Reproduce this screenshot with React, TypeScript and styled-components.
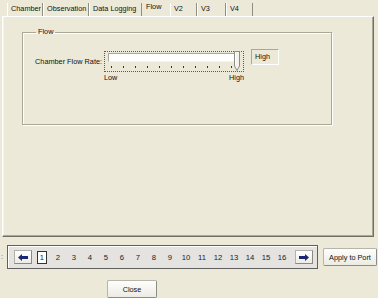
import * as React from 'react';
import styled, { createGlobalStyle, css } from 'styled-components';

const GlobalStyle = createGlobalStyle`
  html, body {
    margin: 0;
    padding: 0;
    background: #ece9d8;
  }

  body {
    font-family: 'Liberation Sans', Arial, sans-serif;
    font-size: 7.3px;
    color: #111;
  }
`;

const Window = styled.div`
  width: 378px;
  height: 298px;
  overflow: hidden;
  background: #ece9d8;
  display: flex;
  flex-direction: column;
`;

const TabStrip = styled.div`
  display: flex;
  align-items: flex-end;
  height: 16px;
  padding-left: 7px;
`;

const Tab = styled.div<{ $width: number; $selected?: boolean }>`
  box-sizing: border-box;
  width: ${({ $width }) => $width}px;
  height: 13px;
  line-height: 12px;
  padding-left: 4px;
  white-space: nowrap;
  border-right: 1px solid #8e8e86;
  box-shadow: inset 1px 0 0 #fff;

  ${({ $selected }) =>
    $selected &&
    css`
      height: 16px;
      line-height: 13px;
      padding-left: 4px;
      border-right: none;
      box-shadow: none;
    `}
`;

const Panel = styled.div`
  box-sizing: border-box;
  height: 226px;
  margin: 0 4px 0 2px;
  border-top: 1px solid #fff;
  border-left: 1px solid #fff;
  border-right: 1px solid #716f64;
  border-bottom: 1px solid #716f64;
  box-shadow: inset -1px -1px 0 #aca899, inset 1px 0 0 #f4f3ee;
  padding: 10px 0 0 19px;
`;

const GroupBox = styled.fieldset`
  box-sizing: border-box;
  width: 310px;
  height: 98px;
  margin: 0;
  padding: 14px 0 0 10px;
  border: 1px solid #aca899;
  box-shadow: 1px 1px 0 #fff, inset 1px 1px 0 #fff;
`;

const GroupTitle = styled.legend`
  margin-left: 3px;
  padding: 0 2px;
  line-height: 10px;
`;

const FieldGrid = styled.div`
  display: grid;
  grid-template-columns: 71px 140px 28px;
  grid-template-rows: auto auto;
  column-gap: 0;
  align-items: start;

  & > :nth-child(3) {
    margin-left: 7px;
    margin-top: -2px;
  }
`;

const FieldLabel = styled.div`
  text-align: right;
  padding-right: 2px;
  line-height: 10px;
  margin-top: 6px;
  white-space: nowrap;
`;

const SliderFrame = styled.div`
  position: relative;
  box-sizing: border-box;
  height: 21px;
  border: 1px dotted #5a5a5a;
  padding: 1px 0 0 3px;
`;

const Track = styled.div`
  box-sizing: border-box;
  width: 128px;
  height: 9px;
  background: #fff;
  border-top: 1px solid #aca899;
  border-left: 1px solid #aca899;
  border-bottom: 1px solid #f4f3ee;
`;

const Thumb = styled.svg`
  position: absolute;
  top: -1px;
  right: 3px;
`;

const Ticks = styled.div`
  display: flex;
  justify-content: space-between;
  padding: 4px 11px 0 3px;
`;

const Tick = styled.span`
  width: 1px;
  height: 2px;
  background: #333;
`;

const RangeLabels = styled.div`
  grid-column: 2;
  display: flex;
  justify-content: space-between;
  line-height: 9px;
  margin-top: 1px;
`;

const ValueBox = styled.div`
  box-sizing: border-box;
  width: 28px;
  height: 16px;
  line-height: 14px;
  padding-left: 3px;
  border-top: 1px solid #aca899;
  border-left: 1px solid #aca899;
  border-right: 1px solid #fff;
  border-bottom: 1px solid #fff;
`;

const Footer = styled.div`
  display: flex;
  align-items: flex-start;
  margin-top: 8px;
`;

const Grip = styled.span`
  width: 7px;
  line-height: 24px;
  padding-left: 1px;
  box-sizing: border-box;
  color: #555;
`;

const NavBar = styled.div`
  box-sizing: border-box;
  width: 311px;
  height: 24px;
  display: flex;
  align-items: center;
  padding-left: 6px;
  background: #e4e3df;
  border: 1px solid #5f5f5f;
  box-shadow: inset 1px 1px 0 #fff;
`;

const ArrowButton = styled.button<{ $side: 'left' | 'right' }>`
  box-sizing: border-box;
  width: 18px;
  height: 14px;
  padding: 0;
  display: flex;
  align-items: center;
  justify-content: center;
  background: linear-gradient(#ffffff, #ecebe4);
  border: 1px solid #b4b2a8;
  border-right-color: #8b8a82;
  border-bottom-color: #8b8a82;
  ${({ $side }) => ($side === 'left' ? 'margin-right: 2px;' : 'margin-left: 5px;')}
`;

const PageCell = styled.span<{ $active?: boolean }>`
  width: 16px;
  display: flex;
  justify-content: center;
  color: #222;
  line-height: 11px;
  font-size: 7.7px;

  ${({ $active }) =>
    $active &&
    css`
      & > span {
        box-sizing: border-box;
        width: 10px;
        height: 13px;
        line-height: 11px;
        text-align: center;
        background: #fff;
        border: 1px solid #333;
      }
    `}
`;

const PushButton = styled.button<{ $width: number }>`
  box-sizing: border-box;
  width: ${({ $width }) => $width}px;
  height: 18px;
  padding: 0;
  font-family: inherit;
  font-size: 7.3px;
  color: #111;
  background: linear-gradient(#fefefd, #ecebe3);
  border: 1px solid #b7b5ab;
  border-right-color: #8d8c84;
  border-bottom-color: #8d8c84;
  border-radius: 2px;
`;

const ApplyButton = styled(PushButton)`
  margin: 3px 0 0 5px;
`;

const CloseRow = styled.div`
  padding: 11px 0 0 107px;
`;

const tabs = [
  { label: 'Chamber', width: 36 },
  { label: 'Observation', width: 46 },
  { label: 'Data Logging', width: 53 },
  { label: 'Flow', width: 28, selected: true },
  { label: 'V2', width: 27 },
  { label: 'V3', width: 29 },
  { label: 'V4', width: 27 },
];

const pages = Array.from({ length: 16 }, (_, i) => i + 1);

const Arrow = ({ dir }: { dir: 'left' | 'right' }) => (
  <svg width="10" height="7" viewBox="0 0 10 7">
    <g transform={dir === 'right' ? 'translate(10,0) scale(-1,1)' : undefined}>
      <polygon points="0,3.5 4,0 4,2 10,2 10,5 4,5 4,7" fill="#1c2671" />
    </g>
  </svg>
);

const App = () => (
  <>
    <GlobalStyle />
    <Window>
      <TabStrip>
        {tabs.map((tab) => (
          <Tab key={tab.label} $width={tab.width} $selected={tab.selected}>
            {tab.label}
          </Tab>
        ))}
      </TabStrip>

      <Panel>
        <GroupBox>
          <GroupTitle>Flow</GroupTitle>
          <FieldGrid>
            <FieldLabel>Chamber Flow Rate:</FieldLabel>
            <SliderFrame>
              <Track />
              <Ticks>
                {Array.from({ length: 11 }, (_, i) => (
                  <Tick key={i} />
                ))}
              </Ticks>
              <Thumb width="6" height="20" viewBox="0 0 6 20">
                <path d="M0.5 0.5 H5.5 V15 L3 19.5 L0.5 15 Z" fill="#f4f3ee" stroke="#8d8c84" />
                <path d="M1.5 1.5 V14.5" stroke="#fff" />
              </Thumb>
            </SliderFrame>
            <ValueBox>High</ValueBox>
            <RangeLabels>
              <span>Low</span>
              <span>High</span>
            </RangeLabels>
          </FieldGrid>
        </GroupBox>
      </Panel>

      <Footer>
        <Grip>:</Grip>
        <NavBar>
          <ArrowButton $side="left">
            <Arrow dir="left" />
          </ArrowButton>
          {pages.map((page) => (
            <PageCell key={page} $active={page === 1}>
              <span>{page}</span>
            </PageCell>
          ))}
          <ArrowButton $side="right">
            <Arrow dir="right" />
          </ArrowButton>
        </NavBar>
        <ApplyButton $width={54}>Apply to Port</ApplyButton>
      </Footer>

      <CloseRow>
        <PushButton $width={50}>Close</PushButton>
      </CloseRow>
    </Window>
  </>
);

export default App;
